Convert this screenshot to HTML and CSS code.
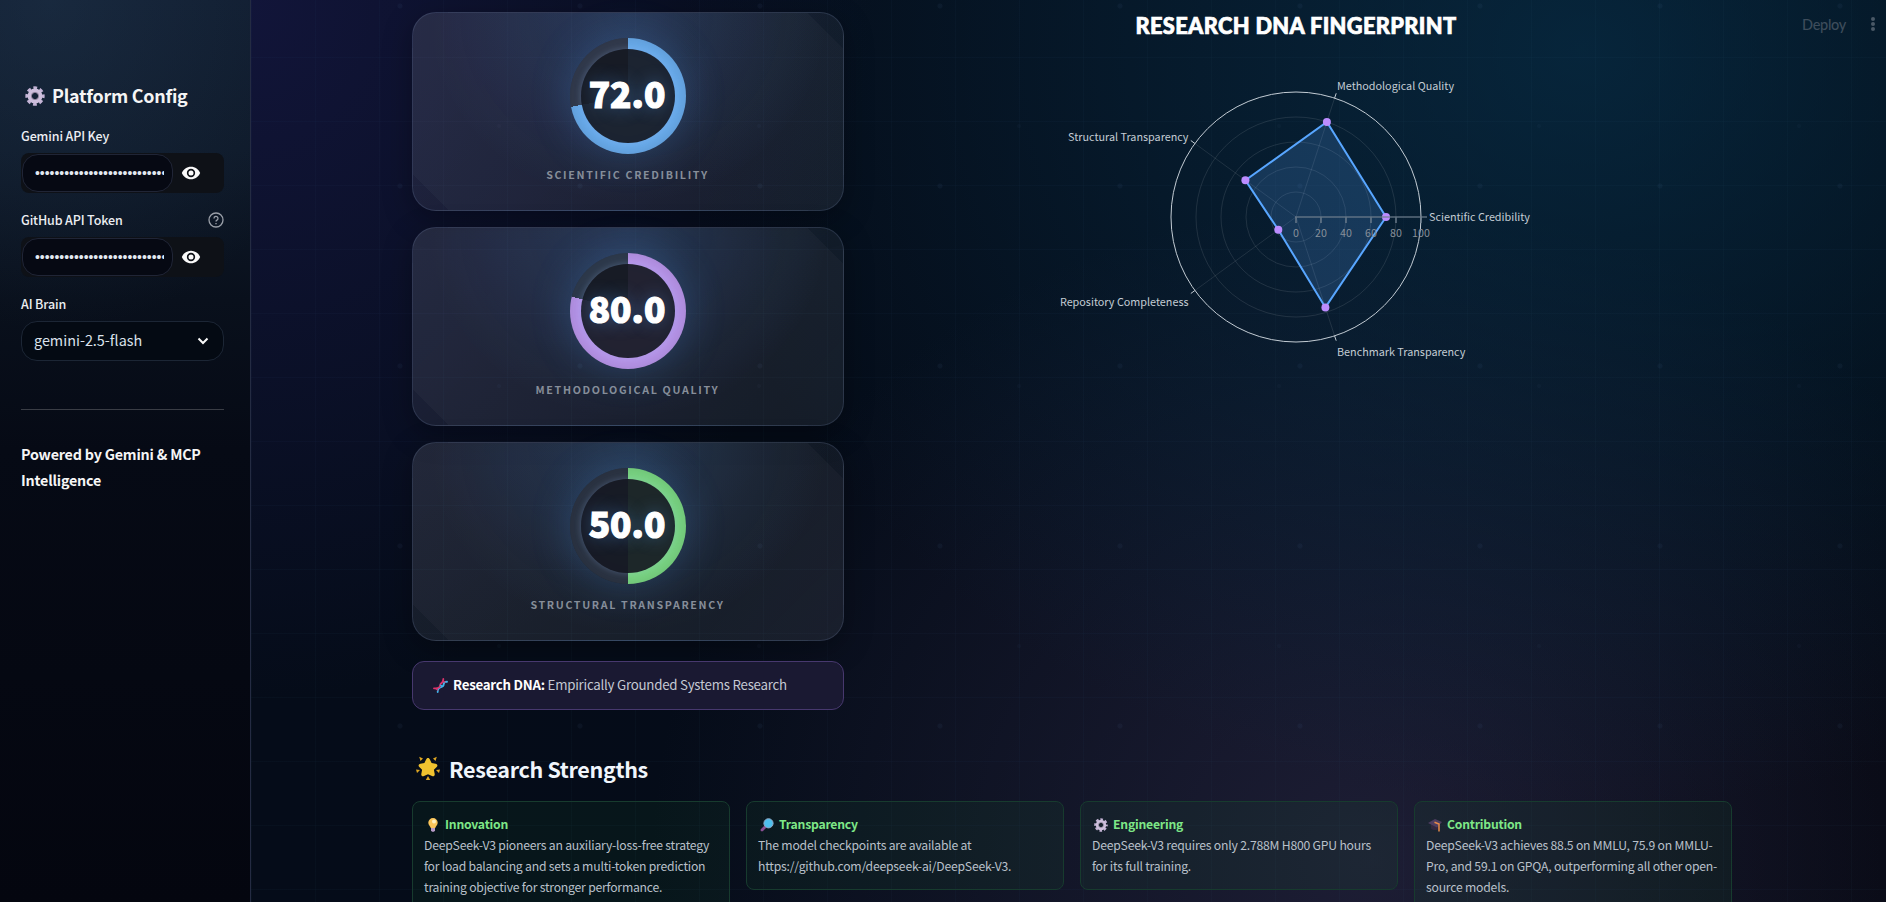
FILE: index.html
```html
<!DOCTYPE html>
<html lang="en">
<head>
<meta charset="utf-8">
<meta name="viewport" content="width=device-width, initial-scale=1">
<title>Research DNA</title>
<link rel="stylesheet" href="styles.css">
</head>
<body>

<svg class="defs" width="0" height="0">
	<symbol id="gear" viewBox="0 0 24 24">
		<circle cx="12" cy="12" r="9.6" fill="none" stroke="#c4b4d6" stroke-width="4" stroke-dasharray="4.4 3.14" stroke-dashoffset="2.2"/>
		<circle cx="12" cy="12" r="6.4" fill="none" stroke="#cdbfdc" stroke-width="5"/>
		<circle cx="12" cy="12" r="4.4" fill="none" stroke="#8d829a" stroke-width="1.2"/>
	</symbol>
	<symbol id="eye" viewBox="0 0 24 24">
		<path d="M12 4.500C7 4.500 2.700 7.600 1 12c1.700 4.400 6 7.500 11 7.500s9.300-3.100 11-7.500c-1.700-4.400-6-7.500-11-7.500zM12 17a5 5 0 1 1 0-10 5 5 0 0 1 0 10zm0-8a3 3 0 1 0 0 6 3 3 0 0 0 0-6z"/>
	</symbol>
</svg>

<aside class="sidebar">
	<h2><svg class="ico"><use href="#gear"/></svg>Platform Config</h2>

	<label for="gemini">Gemini API Key</label>
	<div class="secret">
		<input id="gemini" type="password" value="000000000000000000000000000000000000000">
		<svg class="eye"><use href="#eye"/></svg>
	</div>

	<label for="github">GitHub API Token
		<svg class="help" viewBox="0 0 16 16"><circle cx="8" cy="8" r="7"/><path d="M6 6.400a2 2 0 1 1 3 1.700c-.7.4-1 .7-1 1.400M8 11v1.200"/></svg>
	</label>
	<div class="secret">
		<input id="github" type="password" value="0000000000000000000000000000000000000000">
		<svg class="eye"><use href="#eye"/></svg>
	</div>

	<label>AI Brain</label>
	<div class="select">gemini-2.5-flash
		<svg viewBox="0 0 12 8"><path d="M1.500 1.500 6 6l4.500-4.500"/></svg>
	</div>

	<hr>
	<p>Powered by Gemini &amp; MCP Intelligence</p>
</aside>

<main>
	<div class="toolbar">Deploy
		<svg viewBox="0 0 4 16"><circle cx="2" cy="3" r="2"/><circle cx="2" cy="8" r="2"/><circle cx="2" cy="13" r="2"/></svg>
	</div>

	<div class="overview">
		<div class="scores">
			<div class="card">
				<div class="gauge blue"><span>72.0</span></div>
				<div class="name">Scientific Credibility</div>
			</div>
			<div class="card">
				<div class="gauge purple"><span>80.0</span></div>
				<div class="name">Methodological Quality</div>
			</div>
			<div class="card">
				<div class="gauge green"><span>50.0</span></div>
				<div class="name">Structural Transparency</div>
			</div>
			<div class="dna">
				<svg viewBox="0 0 16 16" fill="none" stroke-linecap="round">
					<path stroke="#3fb4ea" stroke-width="1.900" d="M5 15c0-3 .5-4.500 3-5s3.500-1.500 3.500-3.500S13 4 15 4"/>
					<path stroke="#d9336b" stroke-width="1.900" d="M1 11c2 0 3.500.5 5.500-1S7 6.500 9 5.500 11 3 11 1"/>
					<path stroke="#d9336b" stroke-width="1.100" d="M3 11.500l2 1.500M10.500 3l2.500 1.500"/>
					<path stroke="#3fb4ea" stroke-width="1.100" d="M7.500 7.500l2.500 1"/>
				</svg>
				<b>Research DNA:</b>&nbsp;Empirically Grounded Systems Research
			</div>
		</div>

		<!-- radar: centre 436,217, radius 125 -->
		<svg class="radar" width="872" height="400" viewBox="0 0 872 400">
			<text class="title" x="436" y="34">RESEARCH DNA FINGERPRINT</text>
			<g transform="translate(436 217)">
				<g class="grid">
					<circle r="25"/><circle r="50"/><circle r="75"/><circle r="100"/>
					<path d="M0 0 38.600-118.900M0 0-101.100-73.500M0 0-101.100 73.500M0 0 38.600 118.900"/>
				</g>
				<path class="area" d="M90 0 30.900-95.100-50.600-36.700-17.700 12.800 29.400 90.400Z"/>
				<circle class="edge" r="125"/>
				<path class="edge" d="M38.600-118.900l1.600-4.800M-101.100-73.500l-4.100-3M-101.100 73.500l-4.100 3M38.600 118.900l1.600 4.800"/>
				<g class="dots">
					<circle cx="90" r="4"/><circle cx="30.900" cy="-95.100" r="4"/><circle cx="-50.600" cy="-36.700" r="4"/><circle cx="-17.700" cy="12.800" r="4"/><circle cx="29.400" cy="90.400" r="4"/>
				</g>
				<path class="axis" d="M-1 0H131M0 0V6M25 0V6M50 0V6M75 0V6M100 0V6M125 0V6"/>
				<g class="ticks">
					<text x="0" y="20">0</text><text x="25" y="20">20</text><text x="50" y="20">40</text><text x="75" y="20">60</text><text x="100" y="20">80</text><text x="125" y="20">100</text>
				</g>
				<g class="labels">
					<text x="133" y="4">Scientific Credibility</text>
					<text x="41" y="-127">Methodological Quality</text>
					<text class="end" x="-107.500" y="-76">Structural Transparency</text>
					<text class="end" x="-107.500" y="89">Repository Completeness</text>
					<text x="41" y="139">Benchmark Transparency</text>
				</g>
			</g>
		</svg>
	</div>

	<h3>
		<svg viewBox="0 0 24 24" fill="#f0c22f">
			<path d="M12 2c1 0 1.500.7 1.900 1.500l1.700 3.500 4 .7c1.900.3 2.400 2 1.100 3.300l-2.800 2.800.8 4.200c.3 1.900-1.200 2.800-2.700 2L12 18.200 8 20c-1.500.8-3-.1-2.700-2l.8-4.200L3.300 11C2 9.700 2.500 8 4.400 7.700l4-.7 1.700-3.500C10.500 2.700 11 2 12 2z"/>
			<path fill="#dca522" d="M3.200.8 7 2.500 4.500 5zM20.800.8 17 2.500 19.500 5zM0 13.500l4 .5-3 3zM24 13.500l-4 .5 3 3zM12 20l2.200 4H9.800z"/>
		</svg>
		Research Strengths
	</h3>

	<div class="strengths">
		<div class="item">
			<h4><svg viewBox="0 0 14 14"><path fill="#fbc65a" d="M7 0a4.700 4.700 0 0 1 4.700 4.700c0 2.200-1.900 3.200-2.500 5.300H4.800C4.200 7.900 2.300 6.900 2.300 4.700A4.700 4.700 0 0 1 7 0z"/><circle cx="8" cy="3.400" r="2" fill="#fff0c0"/><path fill="#b79ac6" d="M5 10h4v2.500L8 13.800H6L5 12.500z"/></svg>Innovation</h4>
			DeepSeek-V3 pioneers an auxiliary-loss-free strategy<br>for load balancing and sets a multi-token prediction<br>training objective for stronger performance.
		</div>
		<div class="item">
			<h4><svg viewBox="0 0 14 14"><path stroke="#8a4f93" stroke-width="2.800" stroke-linecap="round" d="M2 12l2.500-2.500"/><circle cx="8.500" cy="5.300" r="4.600" fill="#4fc0ee" stroke="#8ea9c8" stroke-width="1"/></svg>Transparency</h4>
			The model checkpoints are available at<br>https://github.com/deepseek-ai/DeepSeek-V3.
		</div>
		<div class="item">
			<h4><svg viewBox="0 0 24 24"><use href="#gear"/></svg>Engineering</h4>
			DeepSeek-V3 requires only 2.788M H800 GPU hours<br>for its full training.
		</div>
		<div class="item">
			<h4><svg viewBox="0 0 14 14"><path fill="#33283f" d="M3 6h8v4.500c-2 2-6 2-8 0z"/><path fill="#4d3d60" d="M0 5l7-4 7 3-5 5.500z"/><path fill="none" stroke="#e88a4a" stroke-width="1.500" d="M6.500 4.200 11 6v7.500"/></svg>Contribution</h4>
			DeepSeek-V3 achieves 88.5 on MMLU, 75.9 on MMLU-<br>Pro, and 59.1 on GPQA, outperforming all other open-<br>source models.
		</div>
	</div>
</main>

</body>
</html>
```
FILE: styles.css
```css
*{
box-sizing:border-box;
}
html,body{
margin:0;
height:902px;
overflow:hidden;
}
body{
display:flex;
background:#03060f;
color:#f5f5f5;
font-family:"Noto Sans CJK SC","Noto Sans",sans-serif;
}
.defs{
position:absolute;
}

/* sidebar */
.sidebar{
flex:none;
width:251px;
height:902px;
padding:79px 26px 0 21px;
border-right:1px solid #242b42;
background:
	radial-gradient(ellipse 300px 330px at 20% 0,rgba(40,65,90,.35),transparent),
	linear-gradient(180deg,#101c2f 0,#0e1929 150px,#09101c 300px,#060a15 450px,#04060f 902px);
}
.sidebar h2{
display:flex;
align-items:center;
height:32px;
margin:0 0 14px;
font-size:17.900px;
font-weight:600;
letter-spacing:-.25px;
}
.ico{
width:20px;
height:20px;
margin:1px 7px 0 4px;
}
.sidebar label{
display:flex;
align-items:center;
justify-content:space-between;
height:20px;
margin-bottom:8px;
font-size:12.500px;
font-weight:500;
letter-spacing:-.13px;
color:#eceef2;
}
.help{
width:16px;
height:16px;
margin-top:2px;
fill:none;
stroke:#9a9fa8;
stroke-width:1.300;
}
.secret{
display:flex;
align-items:center;
height:40px;
margin-bottom:16px;
padding:1px;
border-radius:8px;
background:#0e1117;
}
.secret input{
width:151px;
height:38px;
padding:0 8px 0 12px;
border:1px solid #202536;
border-radius:16px;
background:#060913;
color:#e2e8f0;
font-family:"Liberation Sans",sans-serif;
font-size:13.900px;
}
.eye{
width:20px;
height:20px;
margin-left:8px;
fill:#fafafa;
}
.select{
display:flex;
align-items:center;
justify-content:space-between;
height:40px;
padding:0 14px 3px 12px;
border:1px solid #1c2635;
border-radius:16px;
background:#040a13;
color:#dbe2ec;
font-size:14.400px;
}
.select svg{
width:12px;
height:8px;
margin-top:2px;
fill:none;
stroke:#fafafa;
stroke-width:2;
}
.sidebar hr{
height:1px;
margin:48px 0 31px;
border:0;
background:#3a3d45;
}
.sidebar p{
margin:0;
font-size:14.300px;
line-height:26px;
font-weight:600;
letter-spacing:-.2px;
}

/* main area */
main{
position:relative;
width:1635px;
height:902px;
padding:0 0 0 161px;
background:
	radial-gradient(circle at 50% 50%,rgba(90,130,180,.07) 2px,transparent 3px) 59px 96px/180px 180px,
	radial-gradient(circle at 50% 50%,rgba(90,130,180,.04) 1.500px,transparent 2.500px) 118px -4px/260px 260px,
	linear-gradient(90deg,rgba(70,140,180,.035) 1px,transparent 1px) 0 0/64px 64px,
	linear-gradient(180deg,rgba(70,140,180,.035) 1px,transparent 1px) 0 57px/64px 64px,
	radial-gradient(ellipse 620px 700px at 0 0,rgba(28,28,84,.55),transparent),
	radial-gradient(ellipse 900px 760px at 1330px 50px,rgba(8,52,80,.65),transparent),
	radial-gradient(ellipse 720px 660px at 1120px 860px,rgba(44,40,70,.62),transparent),
	linear-gradient(90deg,#050c19 0,#050c18 1100px,#03060e 1635px);
}
.toolbar{
position:absolute;
top:13px;
right:11px;
display:flex;
align-items:center;
height:22px;
gap:25px;
color:#3d4c5b;
font:500 14.500px Lato,sans-serif;
letter-spacing:-.3px;
}
.toolbar svg{
width:4px;
height:16px;
fill:#4a5866;
}
.overview{
display:flex;
gap:16px;
height:709px;
}
.scores{
width:432px;
padding-top:12px;
}
.card{
display:flex;
flex-direction:column;
align-items:center;
height:199px;
margin-bottom:16px;
padding-top:25px;
border:1px solid rgba(130,150,190,.2);
border-radius:24px;
background:
	linear-gradient(45deg,transparent 25px,rgba(255,255,255,.025) 25px,rgba(255,255,255,.025) calc(100% - 25px),transparent calc(100% - 25px)),
	radial-gradient(ellipse 200px 190px at 50% 0,rgba(88,166,255,.16),transparent),
	linear-gradient(135deg,rgba(240,245,255,.085),rgba(240,245,255,.045));
box-shadow:0 8px 30px rgba(0,0,0,.3);
}
.gauge{
position:relative;
display:flex;
align-items:center;
justify-content:center;
width:116px;
height:116px;
border-radius:50%;
box-shadow:0 0 42px rgba(88,166,255,.24),inset 0 0 18px rgba(0,0,0,.18);
}
.gauge:before{
content:"";
position:absolute;
inset:11px;
border-radius:50%;
background:rgba(22,25,34,.93);
box-shadow:0 0 6px rgba(140,170,220,.3);
}
.gauge span{
position:relative;
top:-3px;
margin-left:-2px;
color:#fff;
font-size:35.200px;
font-weight:900;
line-height:40px;
-webkit-text-stroke:1.200px #fff;
text-shadow:0 0 18px rgba(88,166,255,.45);
}
.blue{
background:conic-gradient(#6cb0f2 72%,#343d50 72%);
}
.purple{
background:conic-gradient(#bd99f0 79%,#303d50 79%);
}
.green{
background:conic-gradient(#7ddb86 50%,#2d3646 50%);
}
.name{
margin-top:10px;
margin-left:-1px;
color:#878e99;
font-size:10.700px;
font-weight:600;
line-height:22px;
letter-spacing:1.650px;
text-transform:uppercase;
}
.dna{
display:flex;
align-items:center;
height:49px;
margin-top:20px;
padding:0 0 2px 20px;
border:1px solid #47386e;
border-radius:12px;
background:#1a1932;
color:#c4c8d2;
font-size:13.300px;
letter-spacing:-.25px;
}
.dna svg{
width:15px;
height:15px;
margin:1px 5px 0 0;
}
.dna b{
color:#fff;
}

/* radar chart */
.radar .title{
fill:#fff;
stroke:#fff;
stroke-width:.7px;
font:900 21.800px Lato,sans-serif;
letter-spacing:.35px;
text-anchor:middle;
}
.grid{
fill:none;
stroke:rgba(255,255,255,.1);
}
.area{
fill:rgba(88,166,255,.2);
stroke:#58a6ff;
stroke-width:2;
}
.edge{
fill:none;
stroke:#c3ccd4;
}
.dots{
fill:#bc8cff;
}
.axis{
fill:none;
stroke:#71808f;
stroke-opacity:.8;
stroke-width:1.700;
}
.ticks{
fill:#87909a;
font-size:10.700px;
text-anchor:middle;
}
.labels{
fill:#c3ccd4;
font-size:10.800px;
}
.end{
text-anchor:end;
}

/* strengths */
main h3{
display:flex;
align-items:center;
height:36px;
margin:41px 0 15px;
padding-left:4px;
color:#f0f6fc;
font-size:21.500px;
font-weight:600;
letter-spacing:-.34px;
}
main h3 svg{
width:24px;
height:24px;
margin-right:9px;
}
.strengths{
display:flex;
align-items:flex-start;
gap:16px;
width:1320px;
}
.item{
width:318px;
padding:12px 11px;
border:1px solid #173b2e;
border-radius:8px;
background:rgba(35,134,54,.09);
color:#b9c0ca;
font-size:12.200px;
line-height:21px;
letter-spacing:-.21px;
white-space:nowrap;
}
.item h4{
display:flex;
align-items:center;
margin:0;
color:#7ee787;
font-size:12.200px;
font-weight:600;
}
.item h4 svg{
width:14px;
height:14px;
margin:0 5px 0 2px;
}
```
